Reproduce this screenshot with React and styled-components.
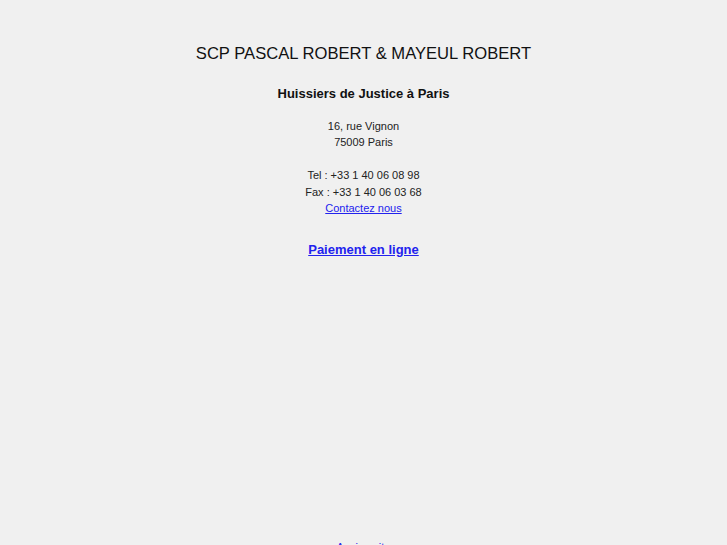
import React from "react";
import styled, { createGlobalStyle } from "styled-components";

const Global = createGlobalStyle`
  html, body { margin: 0; padding: 0; background: #f0f0f0; }
  body { font-family: "Liberation Sans", Arial, sans-serif; color: #222; }
`;

const Page = styled.div`
  display: flex;
  flex-direction: column;
  align-items: center;
  text-align: center;
  padding-top: 43px;
`;

const Title = styled.h1`
  margin: 0;
  font-size: 16.6px;
  font-weight: normal;
  line-height: 22px;
  color: #111;
`;

const Subtitle = styled.h2`
  margin: 20px 0 0;
  font-size: 13px;
  font-weight: bold;
  line-height: 18px;
  color: #111;
`;

const Block = styled.p`
  margin: ${(p) => p.$top}px 0 0;
  font-size: 11px;
  line-height: ${(p) => p.$lh}px;
  color: #222;
`;

const SmallLink = styled.a`
  color: #2222ee;
  text-decoration: underline;
`;

const BigLink = styled.a`
  margin-top: 24px;
  font-size: 13px;
  font-weight: bold;
  line-height: 18px;
  color: #2222ee;
  text-decoration: underline;
`;

const Spacer = styled.div`
  height: 282px;
`;

const FootLink = styled.a`
  font-size: 11px;
  color: #2222ee;
  text-decoration: underline;
`;

export default function App() {
  return (
    <>
      <Global />
      <Page>
        <Title>SCP PASCAL ROBERT &amp; MAYEUL ROBERT</Title>
        <Subtitle>Huissiers de Justice à Paris</Subtitle>
        <Block $top={15} $lh={16}>
          16, rue Vignon
          <br />
          75009 Paris
        </Block>
        <Block $top={17} $lh={16.5}>
          Tel : +33 1 40 06 08 98
          <br />
          Fax : +33 1 40 06 03 68
          <br />
          <SmallLink href="#">Contactez nous</SmallLink>
        </Block>
        <BigLink href="#">Paiement en ligne</BigLink>
        <Spacer />
        <FootLink href="#">Ancien site</FootLink>
      </Page>
    </>
  );
}
